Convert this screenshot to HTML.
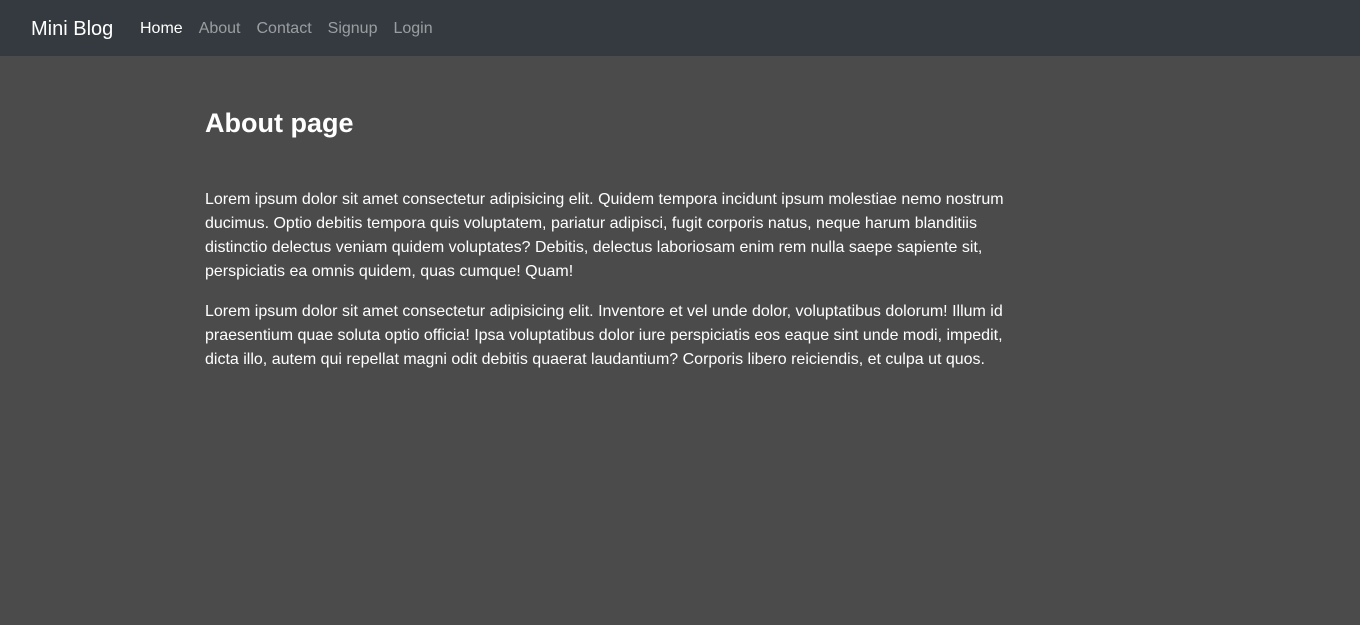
<!DOCTYPE html>
<html><head><meta charset="utf-8"><style>
*{margin:0;padding:0;box-sizing:border-box}
body{width:1360px;height:625px;background:#4b4b4b;font-family:"Liberation Sans",sans-serif;overflow:hidden}
.nav{height:56px;background:#343a40;position:relative}
.brand{position:absolute;left:31px;top:18px;font-size:20px;color:#fff}
.links{position:absolute;left:140px;top:20px;font-size:16px;color:rgba(255,255,255,.5)}
.links span{margin-right:16px}
.links span:first-child{color:#fff}
.main{position:absolute;left:205px;top:106px;width:820px;color:#fff}
h2{font-size:27px;font-weight:bold;line-height:34px;margin-bottom:48px}
p{font-size:16px;line-height:24px;margin-bottom:16px}
</style></head><body>
<div class="nav"><div class="brand">Mini Blog</div>
<div class="links"><span>Home</span><span>About</span><span>Contact</span><span>Signup</span><span>Login</span></div></div>
<div class="main">
<h2>About page</h2>
<p>Lorem ipsum dolor sit amet consectetur adipisicing elit. Quidem tempora incidunt ipsum molestiae nemo nostrum ducimus. Optio debitis tempora quis voluptatem, pariatur adipisci, fugit corporis natus, neque harum blanditiis distinctio delectus veniam quidem voluptates? Debitis, delectus laboriosam enim rem nulla saepe sapiente sit, perspiciatis ea omnis quidem, quas cumque! Quam!</p>
<p>Lorem ipsum dolor sit amet consectetur adipisicing elit. Inventore et vel unde dolor, voluptatibus dolorum! Illum id praesentium quae soluta optio officia! Ipsa voluptatibus dolor iure perspiciatis eos eaque sint unde modi, impedit, dicta illo, autem qui repellat magni odit debitis quaerat laudantium? Corporis libero reiciendis, et culpa ut quos.</p>
</div>
</body></html>
